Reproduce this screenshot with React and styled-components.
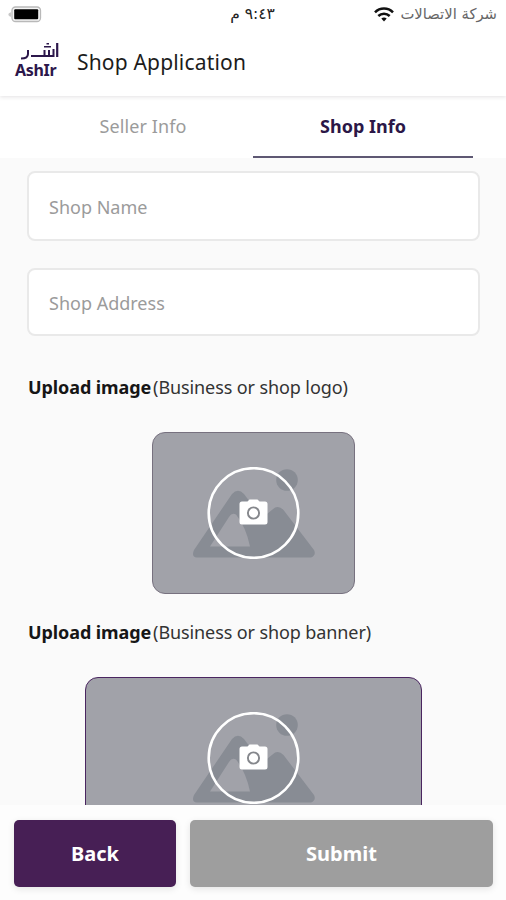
import styled, { createGlobalStyle } from "styled-components";

const GlobalStyle = createGlobalStyle`
  * {
    box-sizing: border-box;
  }
  body {
    margin: 0;
    background-color: #fafafa;
    font-family: "Noto Sans", "Open Sans", sans-serif;
  }
`;

const Screen = styled.div`
  width: 506px;
  height: 900px;
  display: flex;
  flex-direction: column;
  overflow: hidden;
  background-color: #fafafa;
`;

const Top = styled.div`
  flex: 0 0 96px;
  background-color: #fff;
  box-shadow: 0 1px 4px rgba(60, 40, 60, 0.14);
  z-index: 1;
`;

const StatusBar = styled.div`
  height: 28px;
  padding: 0 9px 0 8px;
  display: grid;
  grid-template-columns: 1fr auto 1fr;
  align-items: center;
`;

const Clock = styled.span`
  font-family: "DejaVu Sans", sans-serif;
  font-size: 15.5px;
  line-height: 28px;
  color: #222;
`;

const Carrier = styled.div`
  display: flex;
  align-items: center;
  justify-content: flex-end;
  gap: 6px;
  font-family: "DejaVu Sans", sans-serif;
  font-size: 14.8px;
  line-height: 28px;
  white-space: nowrap;
  color: #666;
`;

const Header = styled.header`
  height: 68px;
  padding-left: 15px;
  display: flex;
  align-items: center;
  gap: 17px;
`;

const Logo = styled.div`
  width: 45px;
  height: 40px;
  display: flex;
  flex-direction: column;
  align-items: flex-end;
  color: #2c174b;
`;

const LogoName = styled.span`
  align-self: flex-start;
  font-size: 16px;
  font-weight: 700;
  line-height: 18px;
  letter-spacing: -0.3px;
`;

const Title = styled.h1`
  margin: 0;
  font-size: 21px;
  font-weight: 400;
  letter-spacing: 0.18px;
  color: #1c1c1c;
`;

const Tabs = styled.nav`
  flex: 0 0 62px;
  padding: 0 33px;
  display: flex;
  background-color: #fff;
`;

const Tab = styled.div`
  flex: 1 1 0;
  padding-bottom: 1px;
  display: flex;
  align-items: center;
  justify-content: center;
  font-size: 18px;
  font-weight: ${({ $active }) => ($active ? 700 : 400)};
  letter-spacing: ${({ $active }) => ($active ? "0" : "0.1px")};
  color: ${({ $active }) => ($active ? "#2b1747" : "#9b9b9b")};
  border-bottom: 2px solid ${({ $active }) => ($active ? "#5e5873" : "transparent")};
`;

const Form = styled.main`
  flex: 1 1 0;
  min-height: 0;
  padding: 13px 26px 0 27px;
  display: flex;
  flex-direction: column;
  overflow: hidden;
`;

const Field = styled.div`
  flex: 0 0 auto;
  height: ${({ $height }) => $height}px;
  margin-bottom: 27px;
  padding: 1px 20px 0;
  display: flex;
  align-items: center;
  border: 2px solid #e9e9e9;
  border-radius: 8px;
  background-color: #fff;
  font-size: 18px;
  color: #9b9b9b;
`;

const Label = styled.p`
  flex: 0 0 26px;
  margin: ${({ $top }) => $top}px 0 32px 1px;
  display: flex;
  gap: 2px;
  font-size: 18px;
  line-height: 26px;
  letter-spacing: -0.1px;
  white-space: nowrap;
  color: #333;
`;

const Strong = styled.strong`
  font-weight: 700;
  color: #161616;
`;

const Upload = styled.div`
  flex: 0 0 162px;
  width: ${({ $width }) => $width}px;
  align-self: center;
  display: flex;
  align-items: center;
  justify-content: center;
  border: 1px solid ${({ $border }) => $border};
  border-radius: 13px;
  background-color: #a1a2a9;
`;

const Footer = styled.footer`
  flex: 0 0 95px;
  padding: 15px 13px 13px 14px;
  display: flex;
  gap: 14px;
  background-color: #fdfdfd;
`;

const Button = styled.button`
  flex: ${({ $grow }) => ($grow ? "1 1 auto" : "0 0 162px")};
  padding: 0;
  border: 0;
  border-radius: 5px;
  background-color: ${({ $color }) => $color};
  box-shadow: 0 2px 7px rgba(0, 0, 0, 0.1);
  color: #fff;
  font-family: inherit;
  font-size: 20px;
  font-weight: 700;
`;

function Battery() {
  return (
    <svg width="34" height="17" viewBox="0 0 34 17">
      <path d="M3 6.2C-.5 7-.5 10 3 10.8Z" fill="#c8c8c8" />
      <rect x="4" y="1" width="28.5" height="14.5" rx="3.5" fill="#f4f4f4" stroke="#b9b9b9" strokeWidth="1.3" />
      <rect x="6.2" y="3.2" width="24" height="10" rx="1" fill="#000" />
    </svg>
  );
}

function Wifi() {
  return (
    <svg width="20" height="15" viewBox="0 0 20 15" fill="none" stroke="#111">
      <path d="M1 5.4C6 .3 14 .3 19 5.4" strokeWidth="2.5" />
      <path d="M4.3 9C7.5 5.9 12.5 5.9 15.7 9" strokeWidth="2.5" />
      <path d="M7.3 11.5C9 10.1 11 10.1 12.7 11.5L10 14.4Z" fill="#111" stroke="none" />
    </svg>
  );
}

function LogoMark() {
  return (
    <svg width="40" height="19" viewBox="0 0 40 19" fill="none" stroke="#2c174b">
      <path d="M37.2 1V15" strokeWidth="2.2" />
      <path d="M33.5 7V14H11M29 8V14M24.500 8V14" strokeWidth="2" />
      <path d="M8 8V12Q8 16.500 1 16.500" strokeWidth="2" />
      <path d="M24 4.800H31M26.500 1.800H29" strokeWidth="1.600" />
    </svg>
  );
}

function PlaceholderArt() {
  return (
    <svg width="122" height="92" viewBox="193 467 122 92">
      <circle cx="287" cy="480" r="10.8" fill="#888c94" />
      <path
        d="M197 557.5Q191 557 194 550L232 494Q238 487.500 244 494L262 518L272.500 509.500Q278 504.500 283.500 510L314 550Q316.500 555 311 557.500ZM210 546.500H250Q246 527 236 514.500Q232 512 229 517Z"
        fill="#888c94"
        fillRule="evenodd"
      />
      <circle cx="253.500" cy="513" r="44.800" fill="none" stroke="#fff" strokeWidth="2.600" />
      <path
        d="M242 501.500H247.500L249.500 499.500H257.500L259.500 501.500H265Q267.500 501.500 267.500 504V522Q267.500 524.500 265 524.500H242Q239.500 524.500 239.500 522V504Q239.500 501.500 242 501.500Z"
        fill="#fff"
      />
      <circle cx="253.500" cy="513" r="5.600" fill="#fff" stroke="#85878c" strokeWidth="1.900" />
    </svg>
  );
}

function App() {
  return (
    <>
      <GlobalStyle />
      <Screen>
        <Top>
          <StatusBar>
            <Battery />
            <Clock dir="rtl">٩:٤٣ م</Clock>
            <Carrier>
              <Wifi />
              <span dir="rtl">شركة الاتصالات</span>
            </Carrier>
          </StatusBar>
          <Header>
            <Logo>
              <LogoMark />
              <LogoName>AshIr</LogoName>
            </Logo>
            <Title>Shop Application</Title>
          </Header>
        </Top>
        <Tabs>
          <Tab>Seller Info</Tab>
          <Tab $active>Shop Info</Tab>
        </Tabs>
        <Form>
          <Field $height={70}>Shop Name</Field>
          <Field $height={68}>Shop Address</Field>
          <Label $top={11}>
            <Strong>Upload image</Strong>
            <span>(Business or shop logo)</span>
          </Label>
          <Upload $width={203} $border="#77717f">
            <PlaceholderArt />
          </Upload>
          <Label $top={25}>
            <Strong>Upload image</Strong>
            <span>(Business or shop banner)</span>
          </Label>
          <Upload $width={337} $border="#4a2560">
            <PlaceholderArt />
          </Upload>
        </Form>
        <Footer>
          <Button $color="#471f55">Back</Button>
          <Button $color="#9e9e9e" $grow>
            Submit
          </Button>
        </Footer>
      </Screen>
    </>
  );
}

export default App;
